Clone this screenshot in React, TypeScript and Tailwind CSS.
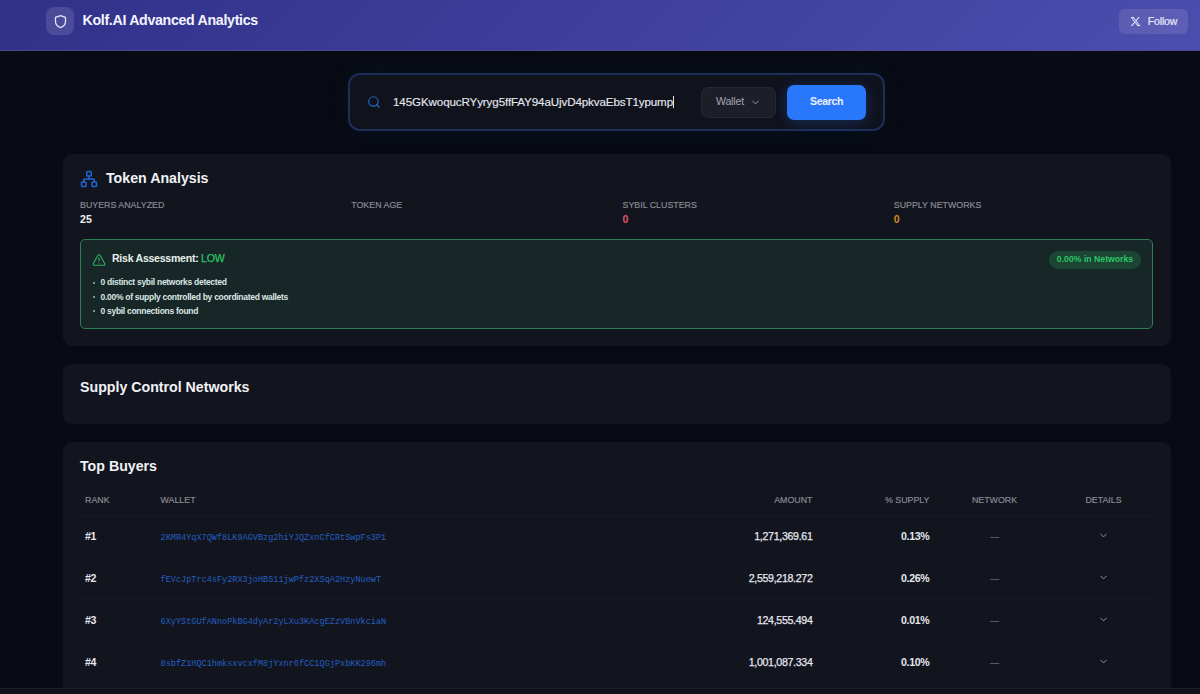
import { AlertTriangle, ChevronDown, Network, Search } from 'lucide-react';
import { FaXTwitter } from 'react-icons/fa6';

interface Buyer {
  rank: number;
  wallet: string;
  amount: string;
  supply: string;
}

const STATS = [
  { label: 'Buyers Analyzed', value: '25', color: 'text-[#f1f2f6]' },
  { label: 'Token Age', value: '', color: 'text-[#f1f2f6]' },
  { label: 'Sybil Clusters', value: '0', color: 'text-[#e0526f]' },
  { label: 'Supply Networks', value: '0', color: 'text-[#d38b1c]' },
];

const FINDINGS = [
  '0 distinct sybil networks detected',
  '0.00% of supply controlled by coordinated wallets',
  '0 sybil connections found',
];

const BUYERS: Buyer[] = [
  { rank: 1, wallet: '2KMR4YqX7QWf8LK9AGVBzg2hiYJQZxnCfCRtSwpFs3P1', amount: '1,271,369.61', supply: '0.13%' },
  { rank: 2, wallet: 'fEVcJpTrc4sFy2RX3joHBS11jwPfz2XSqA2HzyNuewT', amount: '2,559,218.272', supply: '0.26%' },
  { rank: 3, wallet: '6XyYStGUfANnoPkBG4dyAr2yLXu3KAcgEZzVBnVkciaN', amount: '124,555.494', supply: '0.01%' },
  { rank: 4, wallet: '8sbfZ1HQC1hmksxvcxfM8jYxnr6fCC1QGjPxbKK296mh', amount: '1,001,087.334', supply: '0.10%' },
];

const ROW = 'grid grid-cols-[75.5px_527px_125px_117px_130px_88px] items-center pl-[5px]';

function Header() {
  return (
    <header className="flex h-[51px] shrink-0 items-start justify-between border-b border-[#4a4894] bg-linear-[135deg] from-[#313189] to-[#4b4eae] pr-3 pl-[46px]">
      <div className="flex items-center pt-[7px]">
        <div className="flex size-[28px] items-center justify-center rounded-[8px] bg-white/12">
          <svg className="size-[15px] text-[#e4e6fa]" viewBox="0 0 24 24" fill="none" stroke="currentColor" strokeWidth="2" strokeLinejoin="round">
            <path d="M12 2.5 L20 5.5 V12 C20 17 16.5 20 12 21.8 C7.5 20 4 17 4 12 V5.5 Z" />
          </svg>
        </div>
        <h1 className="ml-[8.5px] -mt-px text-[14.2px] font-bold tracking-[-0.31px] whitespace-nowrap text-[#f4f4fe]">Kolf.AI Advanced Analytics</h1>
      </div>
      <button className="mt-[9px] flex h-[25px] w-[69px] items-center justify-center gap-[7px] rounded-[6px] bg-white/10 text-[10.6px] font-medium tracking-[-0.2px] text-[#e6e7fb] [-webkit-text-stroke:0.2px]">
        <FaXTwitter className="size-[11px]" />
        Follow
      </button>
    </header>
  );
}

function SearchBar() {
  return (
    <div className="mt-[22px] ml-[348px] flex h-[58px] w-[537px] items-center rounded-xl border-2 border-[#1b2f58] bg-[#10121c] pr-[17px] pl-[17px] shadow-[0_0_24px_rgba(20,60,130,0.12)]">
      <Search className="size-[14px] text-[#2467cc]" />
      <div className="ml-3 flex w-[308px] items-center text-[11.6px] tracking-[-0.11px] whitespace-nowrap text-[#e4e6ee] [-webkit-text-stroke:0.15px]">
        145GKwoqucRYyryg5ffFAY94aUjvD4pkvaEbsT1ypump
        <span className="h-3 w-px bg-[#e4e6ee]" />
      </div>
      <button className="flex h-[31px] w-[75px] shrink-0 items-center justify-center gap-[6px] rounded-[7px] border border-[#262833] bg-[#1c1e28] text-[10.6px] tracking-[-0.15px] text-[#a3a5b0]">
        Wallet
        <ChevronDown className="size-[11px]" />
      </button>
      <button className="ml-[11px] h-[35px] w-[79px] shrink-0 rounded-[7px] bg-[#2977fb] text-[10.6px] font-bold tracking-[-0.4px] text-[#eaf1ff] shadow-[0_2px_14px_rgba(41,119,251,0.28)]">
        Search
      </button>
    </div>
  );
}

function TokenAnalysis() {
  return (
    <section className="mt-[23px] h-[192px] rounded-[9px] bg-[#13151e] pr-[18px] pl-[17px] pt-[15px]">
      <div className="flex items-center">
        <Network className="mt-px size-[18px] text-[#2264d3]" />
        <h2 className="ml-2 -mt-px text-[14.2px] leading-[19px] font-bold text-[#f1f2f6]">Token Analysis</h2>
      </div>
      <div className="mt-[10px] grid grid-cols-4 gap-x-3">
        {STATS.map((s) => (
          <div key={s.label}>
            <div className="text-[8.85px] leading-[14px] text-[#8b8d98] uppercase [-webkit-text-stroke:0.15px]">{s.label}</div>
            <div className={`h-[14px] text-[10.6px] leading-[15px] font-bold ${s.color}`}>{s.value}</div>
          </div>
        ))}
      </div>
      <div className="mt-[13px] h-[90px] rounded-[5px] border border-[#2a7f57] bg-[#172727] px-[11px] pt-[11px]">
        <div className="flex items-start justify-between">
          <div className="flex items-center">
            <AlertTriangle className="mt-0.5 size-[14px] text-[#28ae5c]" />
            <h3 className="ml-1.5 -mt-[3px] text-[10.6px] leading-[16px] font-bold tracking-[-0.28px] text-[#e7eeec]">
              Risk Assessment: <span className="font-medium text-[#2bc566] [-webkit-text-stroke:0.25px]">LOW</span>
            </h3>
          </div>
          <span className="flex h-[18px] w-[92px] items-center justify-center rounded-full bg-[#1c4534] text-[8.7px] font-bold text-[#2bc566]">
            0.00% in Networks
          </span>
        </div>
        <ul className="mt-[6.5px]">
          {FINDINGS.map((f) => (
            <li key={f} className="flex h-[14.3px] items-center text-[8.5px] font-bold tracking-[-0.29px] text-[#dbe6e3]">
              <span className="ml-px mr-[5.5px] size-0.5 rounded-full bg-[#a5b5b0]" />
              {f}
            </li>
          ))}
        </ul>
      </div>
    </section>
  );
}

function TopBuyers() {
  return (
    <section className="mt-[18px] h-[260px] rounded-t-[9px] bg-[#13151e] px-[17px] pt-[15px]">
      <h2 className="text-[14.2px] leading-[19px] font-bold text-[#f1f2f6]">Top Buyers</h2>
      <div className="mt-[10px]">
        <div className={`${ROW} h-[30px] border-b border-[#191c27] text-[8.85px] text-[#8b8d98] uppercase [-webkit-text-stroke:0.15px]`}>
          <span>Rank</span>
          <span>Wallet</span>
          <span className="text-right">Amount</span>
          <span className="text-right">% Supply</span>
          <span className="text-center">Network</span>
          <span className="text-center">Details</span>
        </div>
        {BUYERS.map((b) => (
          <div key={b.rank} className={`${ROW} h-[42px] border-b border-[#161924] text-[10.6px] tracking-[-0.3px] text-[#e6e7ee]`}>
            <span className="font-bold">#{b.rank}</span>
            <span className="pt-[3px] font-['Liberation_Mono',monospace] text-[8.55px] tracking-normal text-[#225fc0]">{b.wallet}</span>
            <span className="text-right [-webkit-text-stroke:0.25px]">{b.amount}</span>
            <span className="text-right font-bold">{b.supply}</span>
            <span className="pt-[3px] text-center text-[9.2px] text-[#8b8d98]">—</span>
            <ChevronDown className="-mt-0.5 size-[11px] justify-self-center text-[#9c9ea9]" />
          </div>
        ))}
      </div>
    </section>
  );
}

export default function App() {
  return (
    <div className="relative h-[694px] w-[1200px] overflow-hidden bg-[#080b13] font-['Liberation_Sans',Arial,sans-serif]">
      <Header />
      <SearchBar />
      <main className="mr-[29px] ml-[63px]">
        <TokenAnalysis />
        <section className="mt-[18px] h-[60px] rounded-[9px] bg-[#13151e] px-[17px] pt-[14px]">
          <h2 className="text-[14.2px] leading-[19px] font-bold text-[#f1f2f6]">Supply Control Networks</h2>
        </section>
        <TopBuyers />
      </main>
      {/* Docked bar along the bottom edge */}
      <div className="absolute inset-x-0 bottom-0 h-[6px] border-t border-[#1b1e29] bg-[#11121c]" />
    </div>
  );
}
